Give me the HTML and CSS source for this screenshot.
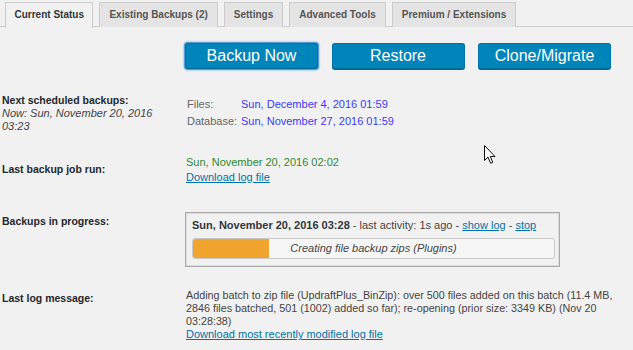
FILE: index.html
```html
<!DOCTYPE html>
<html>
<head>
<meta charset="utf-8">
<link rel="stylesheet" href="styles.css">
</head>
<body>
<nav class="tabs">
  <a class="tab active">Current Status</a>
  <a class="tab">Existing Backups (2)</a>
  <a class="tab">Settings</a>
  <a class="tab">Advanced Tools</a>
  <a class="tab">Premium / Extensions</a>
</nav>

<div class="actions">
  <button class="btn focus">Backup Now</button>
  <button class="btn">Restore</button>
  <button class="btn">Clone/Migrate</button>
</div>

<div class="status">
  <div class="row row-next">
    <div class="label">
      <b>Next scheduled backups:</b><br>
      <i>Now: Sun, November 20, 2016<br>03:23</i>
    </div>
    <div class="value">
      <div class="schedule">
        <span class="key">Files:</span><span class="date">Sun, December 4, 2016 01:59</span>
        <span class="key">Database:</span><span class="date">Sun, November 27, 2016 01:59</span>
      </div>
    </div>
  </div>

  <div class="row row-last">
    <div class="label"><b>Last backup job run:</b></div>
    <div class="value">
      <div class="ok">Sun, November 20, 2016 02:02</div>
      <a class="link dl">Download log file</a>
    </div>
  </div>

  <div class="row row-progress">
    <div class="label"><b>Backups in progress:</b></div>
    <div class="value">
      <div class="job">
        <div class="job-head"><b>Sun, November 20, 2016 03:28</b> - last activity: 1s ago - <a class="link">show log</a> - <a class="link">stop</a></div>
        <div class="bar">
          <div class="fill" style="width: 21%"></div>
          <div class="bar-text">Creating file backup zips (Plugins)</div>
        </div>
      </div>
    </div>
  </div>

  <div class="row row-log">
    <div class="label"><b>Last log message:</b></div>
    <div class="value">
      <div class="logmsg">Adding batch to zip file (UpdraftPlus_BinZip): over 500 files added on this batch (11.4 MB, 2846 files batched, 501 (1002) added so far); re-opening (prior size: 3349 KB) (Nov 20 03:28:38)</div>
      <a class="link">Download most recently modified log file</a>
    </div>
  </div>
</div>

<svg class="cursor" width="13" height="20" viewBox="0 0 13 20">
  <path d="M0.5 0.5 L0.5 15.5 L4 12.2 L6.6 18.3 L8.8 17.4 L6.3 11.5 L11 11.5 Z" fill="#fff" stroke="#111" stroke-width="1" stroke-linejoin="miter"/>
</svg>
</body>
</html>
```

FILE: styles.css
```css
html, body {
  margin: 0;
  padding: 0;
}
body {
  background: #f1f1f1;
  font-family: "Liberation Sans", Arial, sans-serif;
  font-size: 11px;
  line-height: 13px;
  color: #444;
  width: 633px;
  height: 350px;
  overflow: hidden;
  position: relative;
}

/* tabs */
.tabs {
  display: flex;
  gap: 6px;
  padding: 2px 0 0 5px;
  border-bottom: 1px solid #ccc;
  height: 24px;
}
.tab {
  display: block;
  height: 24px;
  line-height: 24px;
  padding: 0 9px;
  border: 1px solid #ccc;
  border-bottom: none;
  background: #e4e4e4;
  color: #555;
  font-weight: bold;
  font-size: 10px;
}
.tab.active {
  background: #f1f1f1;
  color: #32373c;
  padding: 0 8.5px;
  height: 25px;
}

/* buttons */
.actions {
  display: flex;
  gap: 13.5px;
  margin-top: 16px;
  padding-left: 185px;
}
.btn {
  width: 133px;
  height: 26px;
  padding: 0;
  margin: 0;
  border: 1px solid #0073aa;
  border-bottom-color: #006799;
  border-radius: 3px;
  background: #0085ba;
  color: #fff;
  font-family: "Liberation Sans", Arial, sans-serif;
  font-size: 16px;
  line-height: 24px;
  box-shadow: 0 1px 0 #006799;
}
.btn.focus {
  box-shadow: 0 0 0 1px #5b9dd9, 0 0 2px 1px rgba(30, 140, 190, .8);
}

/* status table */
.status {
  margin-top: 24.5px;
}
.row {
  display: grid;
  grid-template-columns: 186px 1fr;
}
.label {
  padding-left: 2px;
  color: #23282d;
}
.label b {
  font-weight: bold;
  font-size: 10.5px;
}
.label i {
  color: #444;
}

.row-next .value {
  padding-top: 4px;
}
.schedule {
  display: grid;
  grid-template-columns: 54px auto;
  row-gap: 4.5px;
  padding-left: 1px;
}
.key {
  color: #666;
}
.date {
  color: #3b3bff;
}

.row-last {
  margin-top: 23.5px;
}
.row-last .label {
  padding-top: 6.5px;
}
.ok {
  color: #2e8b2e;
}
.link {
  color: #0073aa;
  text-decoration: underline;
}
.dl {
  display: inline-block;
  margin-top: 2px;
}

.row-progress {
  margin-top: 28px;
}
.row-progress .label {
  padding-top: 2.5px;
}
.job {
  width: 363px;
  margin-left: -1px;
  border: 1px solid #a9a9a9;
  box-shadow: inset 0 0 0 1px #dcdcdc;
  padding: 5.5px 4px 7px 6px;
}
.job-head {
  color: #444;
}
.job-head b {
  color: #32373c;
}
.bar {
  display: grid;
  margin-top: 6px;
  height: 19px;
  border: 1px solid #c8c8c8;
  border-radius: 3px;
  background: #f6f6f6;
}
.fill,
.bar-text {
  grid-area: 1 / 1;
}
.fill {
  background: #f2a52e;
  border-radius: 2px 0 0 2px;
}
.bar-text {
  text-align: center;
  font-style: italic;
  line-height: 19px;
  color: #444;
}

.row-log {
  margin-top: 22.5px;
}
.row-log .label {
  padding-top: 3px;
}
.logmsg {
  max-width: 442px;
  font-size: 10.75px;
}

/* mouse pointer captured in the screenshot */
.cursor {
  position: absolute;
  left: 484px;
  top: 145px;
}
```
